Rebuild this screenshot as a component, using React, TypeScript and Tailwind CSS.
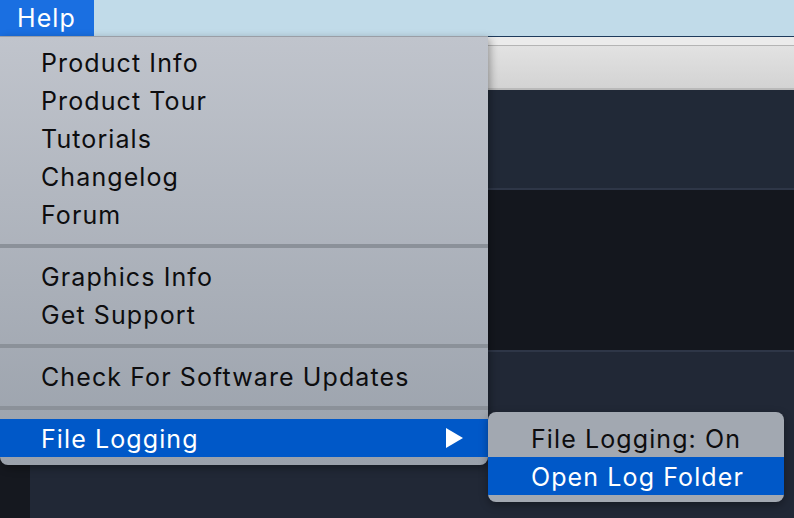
import React from "react";

const GROUPS = [
  ["Product Info", "Product Tour", "Tutorials", "Changelog", "Forum"],
  ["Graphics Info", "Get Support"],
  ["Check For Software Updates"],
];

function Separator() {
  return <div className="mt-[11px] mb-[9px] h-[4px] bg-[#8b9199]" />;
}

function Row({ label, active, children }: { label: string; active?: boolean; children?: React.ReactNode }) {
  return (
    <div
      className={`flex h-[38px] items-center pl-[41px] pr-[25px] ${
        active ? "bg-[#0058c8] text-white" : "text-[#0d0d0f]"
      }`}
    >
      <span className="flex-1 pt-[2px] leading-none">{label}</span>
      {children}
    </div>
  );
}

export default function App() {
  return (
    <div
      className="relative h-[518px] w-[794px] overflow-hidden text-[25px] tracking-[1.1px]"
      style={{ fontFamily: "Inter, 'Noto Sans', sans-serif" }}
    >
      {/* menu bar */}
      <div className="flex h-[36px] bg-[#c1dbe9]">
        <div className="flex w-[94px] items-center bg-[#1a6fe1] pl-[17px] pt-[1px] text-white leading-none">Help</div>
      </div>

      {/* app window behind */}
      <div className="h-px bg-[#1f3b5c]" />
      <div className="h-[8px] bg-[#ebebeb]" />
      <div className="h-px bg-[#b4b4b4]" />
      <div className="h-[42px] bg-gradient-to-b from-[#e2e2e2] to-[#d3d3d3]" />
      <div className="h-[2px] bg-[#b9b9b9]" />
      <div className="h-[98px] bg-[#212937]" />
      <div className="h-[2px] bg-[#2e3647]" />
      <div className="h-[160px] bg-[#14171e]" />
      <div className="h-[2px] bg-[#2e3647]" />
      <div className="flex h-[166px]">
        <div className="w-[30px] bg-[#15181f]" />
        <div className="flex-1 bg-[#212836]" />
      </div>

      {/* dropdown */}
      <div className="absolute left-0 top-[36px] w-[488px] overflow-hidden rounded-b-[8px] border-t border-[#9a9ea6] bg-gradient-to-b from-[#c0c4cc] to-[#9aa1ab] pt-[6px] pb-[8px] shadow-[2px_3px_8px_rgba(0,0,0,0.35)]">
        {GROUPS.map((g, i) => (
          <div key={i}>
            {g.map((l) => (
              <Row key={l} label={l} />
            ))}
            <Separator />
          </div>
        ))}
        <Row label="File Logging" active>
          <svg width="17" height="20" viewBox="0 0 17 20" className="mb-[1px]">
            <path d="M0 0 L17 10 L0 20 Z" fill="white" />
          </svg>
        </Row>
      </div>

      {/* submenu */}
      <div className="absolute left-[488px] top-[412px] w-[296px] overflow-hidden rounded-[8px] bg-[#a2a8b1] pt-[7px] pb-[7px] shadow-[0_3px_8px_rgba(0,0,0,0.35)]">
        <div className="flex h-[38px] items-center pl-[43px] pt-[2px] text-[#0d0d0f] leading-none">File Logging: On</div>
        <div className="flex h-[38px] items-center bg-[#0058c8] pl-[43px] pt-[2px] text-white leading-none">Open Log Folder</div>
      </div>
    </div>
  );
}
